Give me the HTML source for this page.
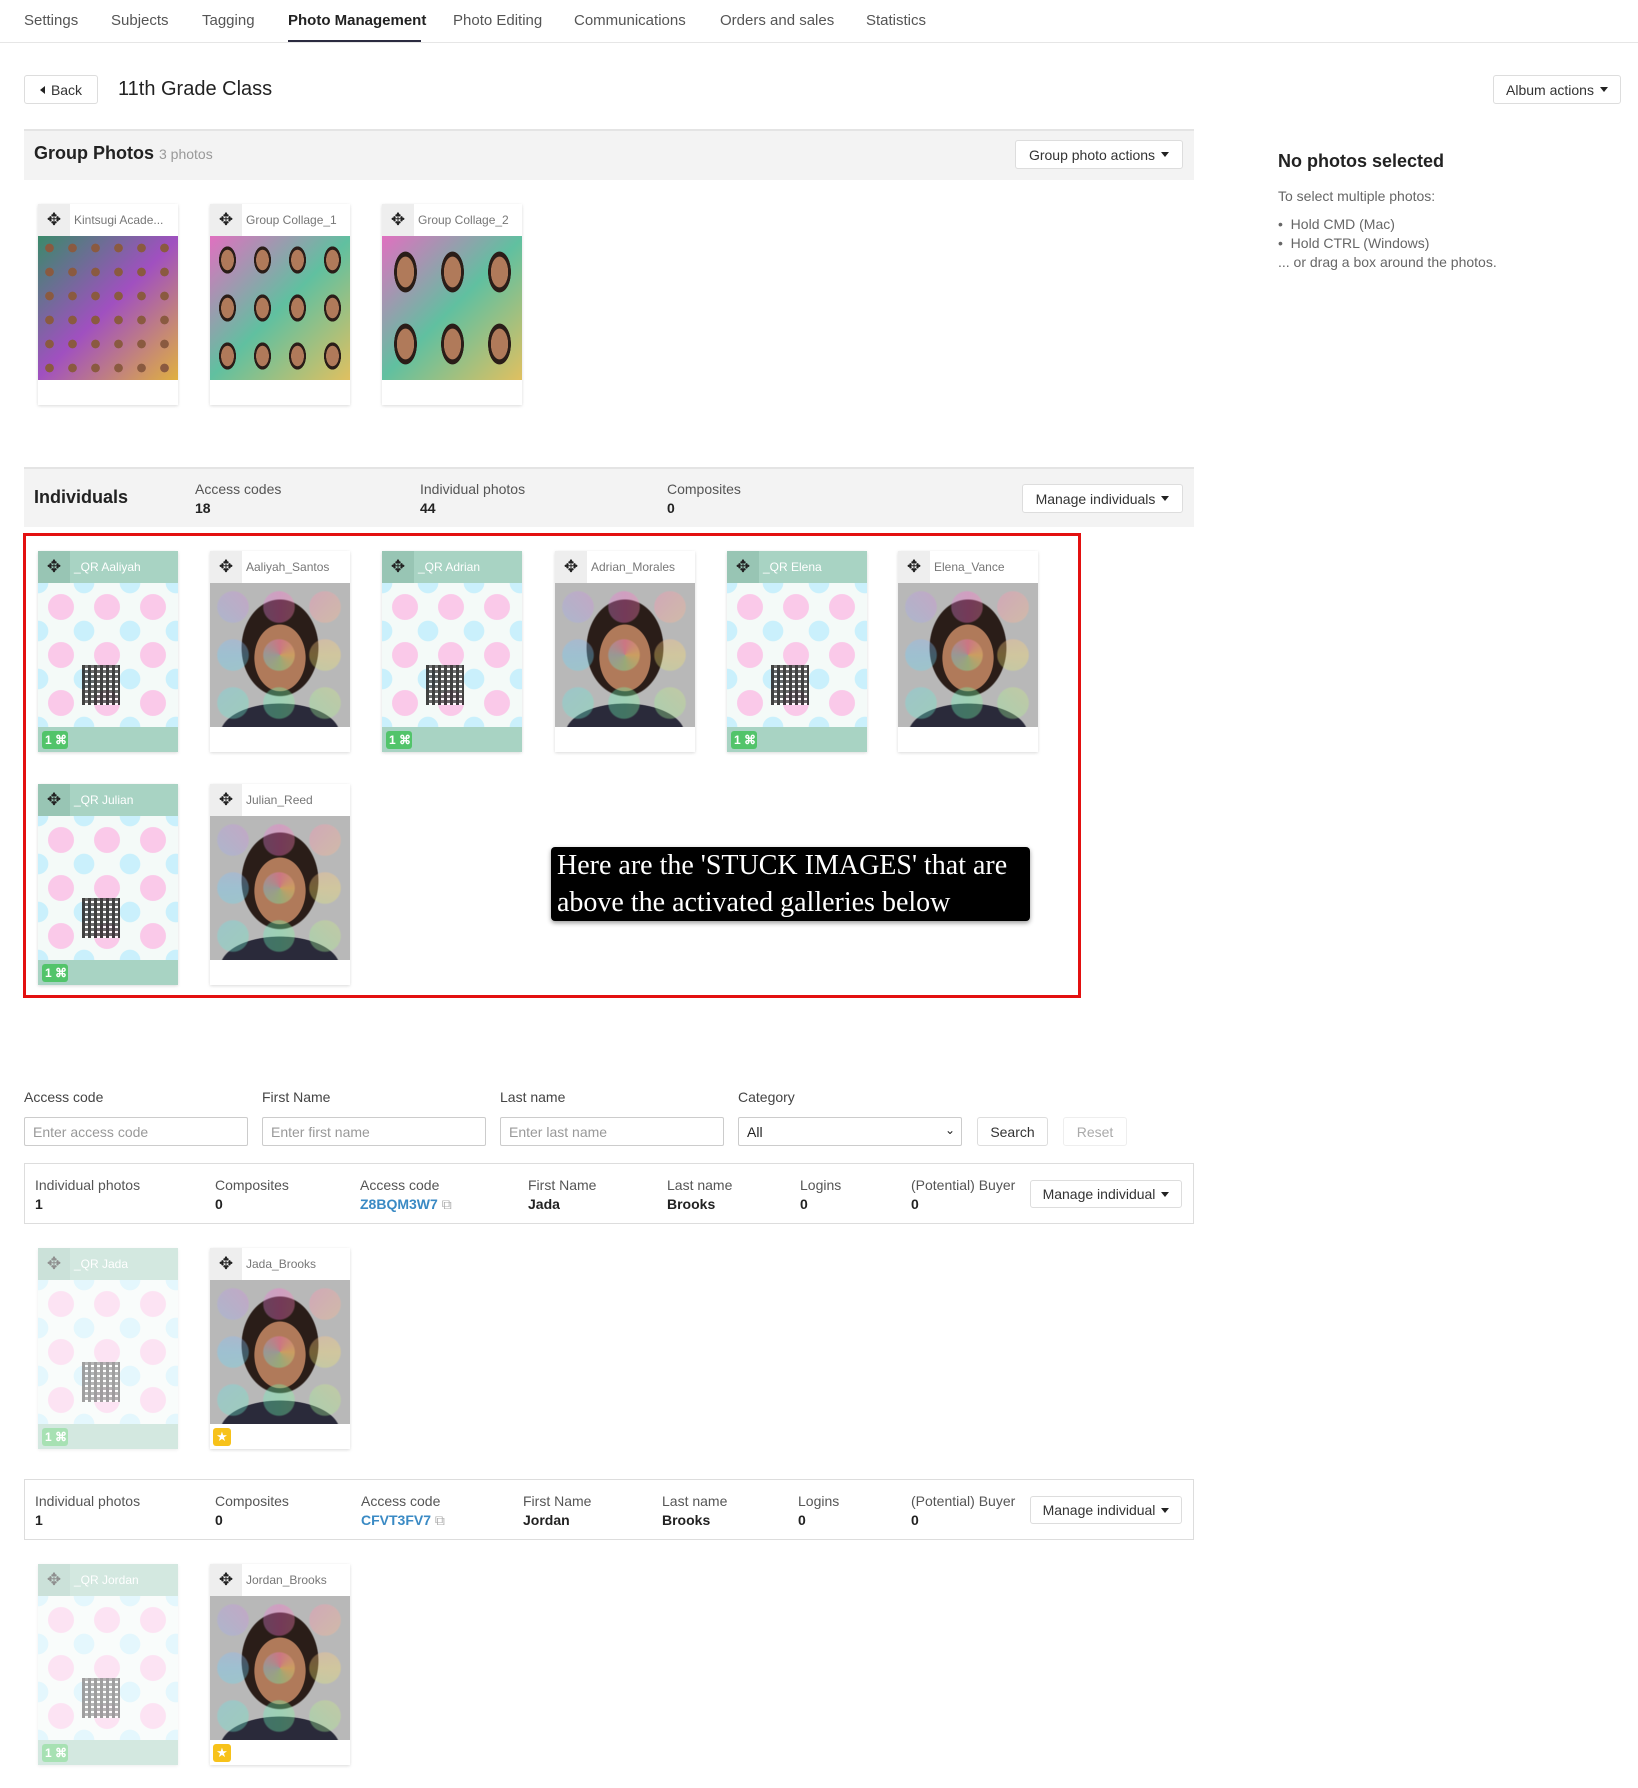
<!DOCTYPE html>
<html><head><meta charset="utf-8"><style>
*{box-sizing:border-box;margin:0;padding:0}
body{width:1638px;height:1788px;background:#fff;font-family:"Liberation Sans",sans-serif;color:#222;position:relative;overflow:hidden}
.a{position:absolute}
.nav span{position:absolute;top:12px;font-size:15px;color:#555}
.btn{position:absolute;border:1px solid #ddd;border-radius:3px;background:#fff;font-size:14px;color:#333;display:flex;align-items:center;justify-content:center;gap:6px}
.tri{display:inline-block;border-left:4px solid transparent;border-right:4px solid transparent;border-top:5px solid #222}
.band{position:absolute;left:24px;width:1170px;background:#f3f3f3;border-top:2px solid #e4e4e4}
.card{position:absolute;width:140px;background:#fff;box-shadow:0 1px 3px rgba(0,0,0,.15)}
.hd{height:32px;display:flex;align-items:center;font-size:12px;color:#777}
.hd i{width:32px;height:32px;background:#eee;display:flex;align-items:center;justify-content:center;font-style:normal;font-size:17px;color:#222;margin-right:4px}
.qr .hd{background:#a8d3c3;color:#fff}.qr .hd i{background:#98c5b4}
.img{height:144px;position:relative;overflow:hidden}
.ft{height:25px;position:relative}
.qr .ft{background:#a8d3c3}
.badge{position:absolute;left:4px;top:4px;width:26px;height:18px;background:#52c46a;border-radius:3px;color:#fff;font-size:12px;font-weight:bold;padding-left:3px;line-height:18px}
.port{background:
radial-gradient(ellipse 30% 38% at 50% 52%,#b07a5a 0 60%,transparent 62%),
radial-gradient(ellipse 45% 55% at 50% 45%,#2a1d18 0 60%,transparent 62%),
radial-gradient(ellipse 60% 30% at 50% 105%,#2a2a3a 0 70%,transparent 72%),
#b8b8b8}
.port::after{content:"";position:absolute;inset:0;background:radial-gradient(circle,transparent 0 0,transparent 1px),conic-gradient(from 0deg,#ff70d0,#ffe070,#70ffb0,#70d0ff,#ff70d0) ;opacity:.35;-webkit-mask:radial-gradient(circle,#000 0 45%,transparent 50%) 0 0/46px 48px;mask:radial-gradient(circle,#000 0 45%,transparent 50%) 0 0/46px 48px}
.qrimg{background:
radial-gradient(circle,rgba(255,160,220,.55) 0 38%,transparent 40%) 0 0/46px 48px,
radial-gradient(circle,rgba(160,230,255,.5) 0 30%,transparent 32%) 23px 24px/46px 48px,#f4faf8}
.qrimg::after{content:"";position:absolute;left:44px;top:82px;width:38px;height:40px;background:repeating-linear-gradient(90deg,#222 0 3px,transparent 3px 6px),repeating-linear-gradient(0deg,#fff 0 2px,transparent 2px 5px),#555;opacity:.85}
.fade{opacity:.5}
.lbl{position:absolute;font-size:14px;color:#444}
.inp{position:absolute;top:1117px;height:29px;border:1px solid #ccc;border-radius:2px;font-size:14px;color:#999;padding:6px 8px}
.rowbox{position:absolute;left:24px;width:1170px;height:61px;border:1px solid #ddd}
.c{position:absolute;font-size:14px;color:#555}
.c b{display:block;color:#222;margin-top:3px}
.star{position:absolute;left:3px;top:4px;width:18px;height:18px;background:#f7c21a;border-radius:3px;color:#fff;font-size:13px;text-align:center;line-height:18px}
</style></head><body>
<div class="nav">
<span style="left:24px">Settings</span><span style="left:111px">Subjects</span><span style="left:202px">Tagging</span><span style="left:288px;color:#222;font-weight:bold">Photo Management</span><span style="left:453px">Photo Editing</span><span style="left:574px">Communications</span><span style="left:720px">Orders and sales</span><span style="left:866px">Statistics</span>
</div>
<div class="a" style="left:288px;top:40px;width:133px;height:3px;background:#2b2b40"></div>
<div class="a" style="left:0;top:42px;width:1638px;height:1px;background:#e6e6e6"></div>

<div class="btn" style="left:24px;top:75px;width:74px;height:29px"><span style="border-top:4px solid transparent;border-bottom:4px solid transparent;border-right:5px solid #222"></span>Back</div>
<div class="a" style="left:118px;top:78px;font-size:20px;color:#222">11th Grade Class</div>
<div class="btn" style="left:1493px;top:75px;width:128px;height:29px">Album actions <span class="tri"></span></div>

<div class="band" style="top:129px;height:51px"></div>
<div class="a" style="left:34px;top:143px;font-size:18px;font-weight:bold">Group Photos <span style="font-size:14px;color:#999;font-weight:normal">3 photos</span></div>
<div class="btn" style="left:1015px;top:140px;width:168px;height:29px">Group photo actions <span class="tri"></span></div>

<div class="card" style="left:38px;top:204px"><div class="hd"><i>✥</i>Kintsugi Acade...</div><div class="img" style="background:radial-gradient(circle,#8a5a40 0 25%,transparent 27%) 0 0/23px 24px,linear-gradient(135deg,#3a8a6a,#a050c0,#e0b040)"></div><div class="ft"></div></div>
<div class="card" style="left:210px;top:204px"><div class="hd"><i>✥</i>Group Collage_1</div><div class="img" style="background:radial-gradient(ellipse 30% 35%,#b07a5a 0 60%,#2a1d18 62% 80%,transparent 82%) 0 0/35px 48px,linear-gradient(135deg,#e070c0,#60c0a0,#e0c060)"></div><div class="ft"></div></div>
<div class="card" style="left:382px;top:204px"><div class="hd"><i>✥</i>Group Collage_2</div><div class="img" style="background:radial-gradient(ellipse 30% 35%,#b07a5a 0 60%,#2a1d18 62% 80%,transparent 82%) 0 0/47px 72px,linear-gradient(135deg,#e070c0,#60c0a0,#e0c060)"></div><div class="ft"></div></div>

<div class="a" style="left:1278px;top:151px;font-size:18px;font-weight:bold">No photos selected</div>
<div class="a" style="left:1278px;top:187px;font-size:14px;color:#666;line-height:19px">To select multiple photos:<br><div style="margin-top:9px">• &nbsp;Hold CMD (Mac)<br>• &nbsp;Hold CTRL (Windows)</div>... or drag a box around the photos.</div>

<div class="band" style="top:467px;height:60px"></div>
<div class="a" style="left:34px;top:487px;font-size:18px;font-weight:bold">Individuals</div>
<div class="c" style="left:195px;top:481px">Access codes<b>18</b></div>
<div class="c" style="left:420px;top:481px">Individual photos<b>44</b></div>
<div class="c" style="left:667px;top:481px">Composites<b>0</b></div>
<div class="btn" style="left:1022px;top:484px;width:161px;height:29px">Manage individuals <span class="tri"></span></div>

<div class="a" style="left:23px;top:533px;width:1058px;height:465px;border:3px solid #e31010"></div>
<div class="card qr" style="left:38px;top:551px"><div class="hd"><i>✥</i>_QR Aaliyah</div><div class="img qrimg"></div><div class="ft"><div class="badge">1 ⌘</div></div></div>
<div class="card" style="left:210px;top:551px"><div class="hd"><i>✥</i>Aaliyah_Santos</div><div class="img port"></div><div class="ft"></div></div>
<div class="card qr" style="left:382px;top:551px"><div class="hd"><i>✥</i>_QR Adrian</div><div class="img qrimg"></div><div class="ft"><div class="badge">1 ⌘</div></div></div>
<div class="card" style="left:555px;top:551px"><div class="hd"><i>✥</i>Adrian_Morales</div><div class="img port"></div><div class="ft"></div></div>
<div class="card qr" style="left:727px;top:551px"><div class="hd"><i>✥</i>_QR Elena</div><div class="img qrimg"></div><div class="ft"><div class="badge">1 ⌘</div></div></div>
<div class="card" style="left:898px;top:551px"><div class="hd"><i>✥</i>Elena_Vance</div><div class="img port"></div><div class="ft"></div></div>
<div class="card qr" style="left:38px;top:784px"><div class="hd"><i>✥</i>_QR Julian</div><div class="img qrimg"></div><div class="ft"><div class="badge">1 ⌘</div></div></div>
<div class="card" style="left:210px;top:784px"><div class="hd"><i>✥</i>Julian_Reed</div><div class="img port"></div><div class="ft"></div></div>
<div class="a" style="left:551px;top:847px;width:479px;height:74px;background:#000;border-radius:4px;box-shadow:0 2px 5px rgba(0,0,0,.4);color:#fff;font-family:'Liberation Serif',serif;font-size:28px;line-height:37px;padding:0 6px">Here are the 'STUCK IMAGES' that are above the activated galleries below</div>

<div class="lbl" style="left:24px;top:1089px">Access code</div>
<div class="lbl" style="left:262px;top:1089px">First Name</div>
<div class="lbl" style="left:500px;top:1089px">Last name</div>
<div class="lbl" style="left:738px;top:1089px">Category</div>
<div class="inp" style="left:24px;width:224px">Enter access code</div>
<div class="inp" style="left:262px;width:224px">Enter first name</div>
<div class="inp" style="left:500px;width:224px">Enter last name</div>
<div class="inp" style="left:738px;width:224px;color:#222">All<span style="position:absolute;right:6px;top:5px;font-size:12px">⌄</span></div>
<div class="btn" style="left:977px;top:1117px;width:71px;height:29px">Search</div>
<div class="btn" style="left:1063px;top:1117px;width:64px;height:29px;color:#aaa;border-color:#eee">Reset</div>

<div class="rowbox" style="top:1163px"></div>
<div class="c" style="left:35px;top:1177px">Individual photos<b>1</b></div>
<div class="c" style="left:215px;top:1177px">Composites<b>0</b></div>
<div class="c" style="left:360px;top:1177px">Access code<b style="color:#3a8ac4">Z8BQM3W7 <span style="color:#aaa;font-weight:normal">⧉</span></b></div>
<div class="c" style="left:528px;top:1177px">First Name<b>Jada</b></div>
<div class="c" style="left:667px;top:1177px">Last name<b>Brooks</b></div>
<div class="c" style="left:800px;top:1177px">Logins<b>0</b></div>
<div class="c" style="left:911px;top:1177px">(Potential) Buyer<b>0</b></div>
<div class="btn" style="left:1030px;top:1180px;width:152px;height:28px">Manage individual <span class="tri"></span></div>
<div class="card qr fade" style="left:38px;top:1248px"><div class="hd"><i>✥</i>_QR Jada</div><div class="img qrimg"></div><div class="ft"><div class="badge">1 ⌘</div></div></div>
<div class="card" style="left:210px;top:1248px"><div class="hd"><i>✥</i>Jada_Brooks</div><div class="img port"></div><div class="ft"><div class="star">★</div></div></div>

<div class="rowbox" style="top:1479px"></div>
<div class="c" style="left:35px;top:1493px">Individual photos<b>1</b></div>
<div class="c" style="left:215px;top:1493px">Composites<b>0</b></div>
<div class="c" style="left:361px;top:1493px">Access code<b style="color:#3a8ac4">CFVT3FV7 <span style="color:#aaa;font-weight:normal">⧉</span></b></div>
<div class="c" style="left:523px;top:1493px">First Name<b>Jordan</b></div>
<div class="c" style="left:662px;top:1493px">Last name<b>Brooks</b></div>
<div class="c" style="left:798px;top:1493px">Logins<b>0</b></div>
<div class="c" style="left:911px;top:1493px">(Potential) Buyer<b>0</b></div>
<div class="btn" style="left:1030px;top:1496px;width:152px;height:28px">Manage individual <span class="tri"></span></div>
<div class="card qr fade" style="left:38px;top:1564px"><div class="hd"><i>✥</i>_QR Jordan</div><div class="img qrimg"></div><div class="ft"><div class="badge">1 ⌘</div></div></div>
<div class="card" style="left:210px;top:1564px"><div class="hd"><i>✥</i>Jordan_Brooks</div><div class="img port"></div><div class="ft"><div class="star">★</div></div></div>
</body></html>
